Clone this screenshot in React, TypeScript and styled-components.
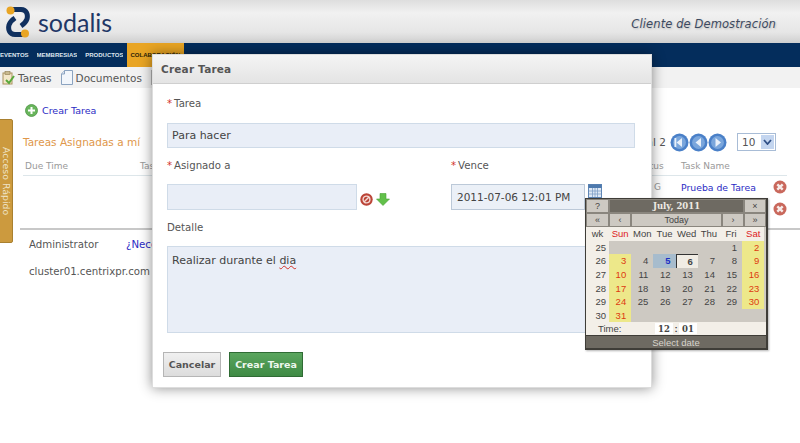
import styled, { createGlobalStyle } from "styled-components";

const GlobalStyle = createGlobalStyle`
  html, body {
    margin: 0;
    padding: 0;
    background: #fff;
    overflow: hidden;
  }
  #root {
    height: 443px;
  }
  * {
    box-sizing: border-box;
  }
`;

const FONT = `"DejaVu Sans", Verdana, sans-serif`;

const CALENDAR_WEEKS: { wk: number; days: (number | null)[] }[] = [
  { wk: 25, days: [null, null, null, null, null, 1, 2] },
  { wk: 26, days: [3, 4, 5, 6, 7, 8, 9] },
  { wk: 27, days: [10, 11, 12, 13, 14, 15, 16] },
  { wk: 28, days: [17, 18, 19, 20, 21, 22, 23] },
  { wk: 29, days: [24, 25, 26, 27, 28, 29, 30] },
  { wk: 30, days: [31, null, null, null, null, null, null] },
];
const DAY_NAMES = ["Sun", "Mon", "Tue", "Wed", "Thu", "Fri", "Sat"];

function Logo() {
  return (
    <svg width="24" height="32" viewBox="0 0 24 32">
      <path
        d="M5 3.5 H15 C21 3.5 22 9 21 13 C20 16 18 18 15 20"
        fill="none"
        stroke="#10305f"
        strokeWidth="5"
      />
      <path
        d="M19 28.5 H9 C3 28.5 2 23 3 19 C4 16 6 14 9 12"
        fill="none"
        stroke="#10305f"
        strokeWidth="5"
      />
      <circle cx="4.5" cy="4.5" r="4" fill="#e9a524" />
      <circle cx="19" cy="27.5" r="4" fill="#e9a524" />
    </svg>
  );
}

function TaskIcon() {
  return (
    <svg width="13" height="14" viewBox="0 0 13 14">
      <rect x="1" y="2" width="9" height="11" fill="#f3e7c9" stroke="#a8915f" />
      <rect x="3" y="0.5" width="5" height="3" fill="#c9b98e" stroke="#8d7a4e" strokeWidth="0.6" />
      <path d="M4 9 L7 12 L12 5" fill="none" stroke="#58a83c" strokeWidth="2" />
    </svg>
  );
}

function DocIcon() {
  return (
    <svg width="12" height="15" viewBox="0 0 12 15">
      <path d="M3.5 .5 H11.5 V14.5 H.5 V4 Z" fill="#f2f6fb" stroke="#8ba3c0" />
      <path d="M3.5 .5 V4 H.5" fill="#dbe5f1" stroke="#8ba3c0" />
    </svg>
  );
}

function PlusIcon() {
  return (
    <svg width="13" height="13" viewBox="0 0 13 13">
      <circle cx="6.5" cy="6.5" r="6" fill="#69b55c" stroke="#4c9444" strokeWidth="0.8" />
      <path d="M6.5 3 V10 M3 6.5 H10" stroke="#fff" strokeWidth="2" />
    </svg>
  );
}

function PagerIcon({ kind }: { kind: "first" | "prev" | "next" }) {
  return (
    <svg width="19" height="19" viewBox="0 0 19 19">
      <circle cx="9.5" cy="9.5" r="9" fill="#4a80c8" />
      <circle cx="9.5" cy="9.5" r="6.4" fill="#7aa6dc" />
      {kind === "next" ? (
        <path d="M7.5 5 L13 9.5 L7.5 14 Z" fill="#e8f0fa" />
      ) : (
        <path d="M12 5 L6.5 9.5 L12 14 Z" fill="#e8f0fa" />
      )}
      {kind === "first" && <rect x="4.5" y="5" width="1.8" height="9" fill="#e8f0fa" />}
    </svg>
  );
}

function CloseIcon() {
  return (
    <svg width="14" height="14" viewBox="0 0 14 14">
      <circle cx="7" cy="7" r="6.5" fill="#c9685c" />
      <path d="M4.3 4.3 L9.7 9.7 M9.7 4.3 L4.3 9.7" stroke="#f6ecea" strokeWidth="2.4" />
    </svg>
  );
}

function ClearIcon() {
  return (
    <svg width="13" height="13" viewBox="0 0 13 13">
      <circle cx="6.5" cy="6.5" r="6.2" fill="#bb4437" />
      <circle cx="6.5" cy="6.5" r="3.4" fill="none" stroke="#f3d9d4" strokeWidth="1.4" />
      <path d="M4 9 L9 4" stroke="#f3d9d4" strokeWidth="1.4" />
    </svg>
  );
}

function DownIcon() {
  return (
    <svg width="14" height="13" viewBox="0 0 14 13">
      <path d="M4 0.5 H10 V6 H13.5 L7 12.5 L.5 6 H4 Z" fill="#62c04a" stroke="#4aa336" strokeWidth="0.6" />
    </svg>
  );
}

function CalendarIcon() {
  return (
    <svg width="14" height="14" viewBox="0 0 14 14">
      <rect x="0.5" y="0.5" width="13" height="13" fill="#dfe9f5" stroke="#5f86b5" />
      <rect x="0.5" y="0.5" width="13" height="3.5" fill="#4d79ad" />
      <path
        d="M4.5 4 V13 M7 4 V13 M9.5 4 V13 M1 7 H13 M1 10 H13"
        stroke="#7f9fc6"
        strokeWidth="0.8"
      />
    </svg>
  );
}

const Page = styled.div`
  position: relative;
  width: 800px;
  height: 443px;
  overflow: hidden;
  font-family: ${FONT};
  color: #555;
`;

const TopBar = styled.header`
  height: 43px;
  padding: 6px 24px 0 6px;
  display: flex;
  justify-content: space-between;
  background: linear-gradient(#dedede, #f1f1f1 30%, #e6e6e6 75%, #cfcfcf);
`;

const Brand = styled.div`
  display: flex;
  align-items: center;
  height: 32px;
  gap: 8px;
  font-family: "Lato", "Open Sans", sans-serif;
  font-size: 25px;
  color: #1f3766;
`;

const ClientName = styled.div`
  font-family: "DejaVu Sans", sans-serif;
  font-style: italic;
  font-size: 11.5px;
  letter-spacing: 0.1px;
  color: #3d4a5f;
  padding-top: 11px;
  text-shadow: 1px 1px 2px #bbb;
`;

const NavBar = styled.nav`
  height: 24px;
  background: #042d5c;
  display: flex;
  align-items: stretch;
`;

const NavItem = styled.a<{ $active?: boolean }>`
  display: flex;
  align-items: center;
  padding-left: ${(p) => (p.$active ? "3px" : 0)};
  margin: ${(p) => (p.$active ? "0 0 0 -4px" : "0 8px 0 0")};
  width: ${(p) => (p.$active ? "57px" : "auto")};
  background: ${(p) => (p.$active ? "#e9a524" : "transparent")};
  color: ${(p) => (p.$active ? "#2a2208" : "#dfe6ef")};
  font-family: "Liberation Sans", sans-serif;
  font-size: 6px;
  font-weight: bold;
  white-space: nowrap;
  overflow: hidden;
`;

const TabBar = styled.div`
  height: 21px;
  background: #f2f2f2;
  display: flex;
  align-items: center;
  padding-left: 2px;
  font-size: 10.5px;
  color: #555;
`;

const Tab = styled.div`
  display: flex;
  align-items: center;
  gap: 3px;
  margin-right: 9px;
`;

const TabDivider = styled.span`
  width: 1px;
  height: 15px;
  background: #b5b5b5;
`;

const Content = styled.main`
  padding: 15px 13px 0 23px;
`;

const AddLink = styled.a`
  display: flex;
  align-items: center;
  gap: 4px;
  height: 14px;
  margin-left: 2px;
  font-size: 9.5px;
  color: #2b2bc4;
`;

const ListHead = styled.div`
  display: flex;
  justify-content: space-between;
  align-items: center;
  height: 20px;
  margin-top: 15px;
`;

const ListTitle = styled.h2`
  margin: 0;
  font-size: 10.5px;
  font-weight: normal;
  color: #e0974a;
`;

const Pager = styled.div`
  display: flex;
  align-items: center;
  font-size: 10.5px;
`;

const PagerButtons = styled.div`
  display: flex;
  margin: 0 10px 0 4px;
`;

const PageSize = styled.div`
  width: 39px;
  height: 18px;
  margin-right: 11px;
  border: 1px solid #a8bcd6;
  display: flex;
  align-items: center;
  justify-content: space-between;
  padding: 0 1px 0 4px;
  font-size: 10.5px;
  background: #fff;
`;

const PageSizeArrow = styled.span`
  width: 13px;
  height: 14px;
  background: #c3d5ef;
  display: flex;
  align-items: center;
  justify-content: center;
`;

const TableRow = styled.div<{ $head?: boolean }>`
  display: grid;
  grid-template-columns: 115px 495px 46px 92px 1fr;
  align-items: center;
  height: ${(p) => (p.$head ? "19px" : "22px")};
  padding-left: 2px;
  margin-top: ${(p) => (p.$head ? "5px" : 0)};
  border-bottom: ${(p) => (p.$head ? "1px solid #dde6ea" : "none")};
  font-size: 9px;
  color: #999;
`;

const StatusValue = styled.span`
  padding-left: 19px;
`;

const TaskLink = styled.a`
  color: #2b2bc4;
  font-size: 9.3px;
  white-space: nowrap;
`;

const Footer = styled.footer`
  margin: 8px -13px 0 -3px;
  border-top: 2px solid #c8c8c8;
  padding: 9px 0 0 9px;
  font-size: 10.2px;
  color: #555;
`;

const FooterLine = styled.div`
  display: flex;
  height: 27px;
  white-space: nowrap;
`;

const FooterUser = styled.span`
  width: 97px;
`;

const HelpLink = styled.a`
  color: #2b2bc4;
`;

const QuickAccess = styled.div`
  position: absolute;
  left: -1px;
  top: 119px;
  width: 14px;
  height: 124px;
  background: #cc9a3e;
  border: 1px solid #a9802f;
  border-radius: 0 2px 2px 0;
  display: flex;
  align-items: center;
  justify-content: center;
  color: #efe3c6;
  font-size: 9.4px;
  writing-mode: vertical-rl;
`;

const Modal = styled.section`
  position: absolute;
  left: 152px;
  top: 54px;
  width: 500px;
  height: 334px;
  background: #fff;
  border: 1px solid #ddd;
  box-shadow: 0 0 12px rgba(0, 0, 0, 0.45);
`;

const ModalHead = styled.div`
  height: 29px;
  padding-left: 8px;
  display: flex;
  align-items: center;
  background: linear-gradient(#f4f4f4, #e4e4e4);
  border-bottom: 1px solid #cfcfcf;
  font-size: 10.5px;
  font-weight: bold;
  letter-spacing: 0.2px;
  color: #555;
`;

const ModalBody = styled.div`
  padding: 13px 16px 0 14px;
`;

const Label = styled.label`
  display: block;
  height: 14px;
  font-size: 10.2px;
  line-height: 14px;
  color: #555;
`;

const Req = styled.span`
  color: #d2332a;
  margin-right: 2px;
`;

const Field = styled.input`
  display: block;
  height: 26px;
  width: 100%;
  padding: 0 4px;
  border: 1px solid #cfdbe8;
  background: #e9eef7;
  font-family: ${FONT};
  font-size: 11px;
  color: #444;
  outline: none;
`;

const TaskField = styled(Field)`
  margin-top: 12px;
  height: 25px;
`;

const DueField = styled(Field)`
  width: 134px;
  padding: 0 5px;
  border-color: #bcc9d8;
  background: #ebf0f7;
  font-size: 10.5px;
`;

const AssignedField = styled(Field)`
  width: 190px;
`;

const TwoCols = styled.div`
  display: grid;
  grid-template-columns: 284px 1fr;
  margin-top: 11px;
`;

const FieldRow = styled.div<{ $align: string }>`
  display: flex;
  align-items: ${(p) => p.$align};
  gap: 3px;
  margin-top: 11px;
`;

const AssignActions = styled.div`
  display: flex;
  gap: 3px;
  padding-bottom: 4px;
`;

const DetailLabel = styled(Label)`
  margin-top: 11px;
`;

const DetailBox = styled.div`
  margin-top: 11px;
  height: 87px;
  padding: 7px 4px;
  border: 1px solid #cfdbe8;
  background: #e9eef7;
  font-size: 11px;
  color: #444;
`;

const Misspelled = styled.span`
  text-decoration: underline wavy #d2332a 1px;
`;

const Actions = styled.div`
  display: flex;
  gap: 8px;
  margin: 19px 0 0 -4px;
`;

const Button = styled.button<{ $primary?: boolean }>`
  height: 25px;
  padding: 0;
  width: ${(p) => (p.$primary ? "74px" : "58px")};
  border: 1px solid ${(p) => (p.$primary ? "#2f6b34" : "#b5b5b5")};
  background: ${(p) =>
    p.$primary ? "linear-gradient(#5aa55e, #3e8a44)" : "linear-gradient(#f0f0f0, #dcdcdc)"};
  color: ${(p) => (p.$primary ? "#eef7ee" : "#555")};
  font-family: ${FONT};
  font-size: 9.5px;
  font-weight: bold;
`;

const Calendar = styled.div`
  position: absolute;
  left: 585px;
  top: 198px;
  width: 183px;
  height: 152px;
  border: 1px solid #3f3d38;
  border-width: 1px 2px 2px 1px;
  background: #f3efe8;
  font-family: "Liberation Sans", sans-serif;
  font-size: 9.5px;
  color: #444;
  box-shadow: 1px 1px 2px rgba(0, 0, 0, 0.3);
`;

const CalTitle = styled.div`
  display: grid;
  grid-template-columns: 23px 1fr 22px;
  height: 14px;
  background: #cdc9c2;
`;

const CalCell = styled.div<{ $dark?: boolean }>`
  display: flex;
  align-items: center;
  justify-content: center;
  border: 1px solid #8a867e;
  background: ${(p) => (p.$dark ? "#6e6a62" : "#cdc9c2")};
  color: ${(p) => (p.$dark ? "#eeeae2" : "#444")};
  font-family: ${(p) => (p.$dark ? `"DejaVu Serif", serif` : "inherit")};
  font-weight: ${(p) => (p.$dark ? "bold" : "normal")};
  font-size: ${(p) => (p.$dark ? "8.5px" : "9px")};
`;

const CalNav = styled.div`
  display: grid;
  grid-template-columns: 23px 22px 1fr 22px 22px;
  height: 14px;
`;

const CalGrid = styled.div`
  display: grid;
  grid-template-columns: 23px repeat(7, 22.2px);
  grid-auto-rows: 13.6px;
  background: #cdc9c2;
`;

const CalHeadCell = styled.div<{ $weekend?: boolean }>`
  display: flex;
  align-items: center;
  justify-content: center;
  background: #f3efe8;
  color: ${(p) => (p.$weekend ? "#dd2222" : "#444")};
`;

const WeekCell = styled.div`
  display: flex;
  align-items: center;
  justify-content: flex-end;
  padding-right: 3px;
  background: #f3efe8;
`;

const DayCell = styled.div<{ $weekend?: boolean; $today?: boolean; $selected?: boolean }>`
  display: flex;
  align-items: center;
  justify-content: flex-end;
  padding-right: 5px;
  background: ${(p) =>
    p.$selected ? "#f0ece4" : p.$today ? "#a7bccd" : p.$weekend ? "#ede88a" : "transparent"};
  color: ${(p) => (p.$weekend ? "#dd3a10" : p.$today ? "#1c2fc4" : "#444")};
  font-weight: ${(p) => (p.$today || p.$selected ? "bold" : "normal")};
  border-top: ${(p) => (p.$selected ? "1px solid #333" : "none")};
  border-left: ${(p) => (p.$selected ? "1px solid #333" : "none")};
`;

const EmptyDay = styled.div`
  background: #cdc9c2;
`;

const CalTime = styled.div`
  display: flex;
  align-items: center;
  height: 13px;
  padding-left: 12px;
  background: #f3efe8;
`;

const TimeLabel = styled.span`
  width: 57px;
`;

const TimeBox = styled.span`
  width: 18px;
  height: 11px;
  background: #fff;
  display: flex;
  align-items: center;
  justify-content: center;
  font-family: "DejaVu Serif", serif;
  font-weight: bold;
  font-size: 8.5px;
`;

const TimeColon = styled.span`
  width: 6px;
  text-align: center;
  font-weight: bold;
`;

const CalStatus = styled.div`
  height: 13px;
  display: flex;
  align-items: center;
  justify-content: center;
  background: #6e6a62;
  border-top: 1px solid #3f3d38;
  color: #d8d4cc;
`;

function CalWeek({ wk, days }: { wk: number; days: (number | null)[] }) {
  return (
    <>
      <WeekCell>{wk}</WeekCell>
      {days.map((day, i) =>
        day === null ? (
          <EmptyDay key={i} />
        ) : (
          <DayCell
            key={i}
            $weekend={i === 0 || i === 6}
            $today={day === 5}
            $selected={day === 6}
          >
            {day}
          </DayCell>
        )
      )}
    </>
  );
}

export default function App() {
  return (
    <Page>
      <GlobalStyle />
      <TopBar>
        <Brand>
          <Logo />
          sodalis
        </Brand>
        <ClientName>Cliente de Demostración</ClientName>
      </TopBar>
      <NavBar>
        <NavItem>EVENTOS</NavItem>
        <NavItem>MEMBRESIAS</NavItem>
        <NavItem>PRODUCTOS</NavItem>
        <NavItem $active>COLABORACIÓN</NavItem>
      </NavBar>
      <TabBar>
        <Tab>
          <TaskIcon />
          Tareas
        </Tab>
        <Tab>
          <DocIcon />
          Documentos
        </Tab>
        <TabDivider />
      </TabBar>
      <Content>
        <AddLink>
          <PlusIcon />
          Crear Tarea
        </AddLink>
        <ListHead>
          <ListTitle>Tareas Asignadas a mí</ListTitle>
          <Pager>
            Total 2
            <PagerButtons>
              <PagerIcon kind="first" />
              <PagerIcon kind="prev" />
              <PagerIcon kind="next" />
            </PagerButtons>
            <PageSize>
              10
              <PageSizeArrow>
                <svg width="9" height="6" viewBox="0 0 9 6">
                  <path d="M1 1 L4.5 5 L8 1" fill="none" stroke="#2f4f86" strokeWidth="1.8" />
                </svg>
              </PageSizeArrow>
            </PageSize>
          </Pager>
        </ListHead>
        <TableRow $head>
          <span>Due Time</span>
          <span>Task</span>
          <span>Status</span>
          <span>Task Name</span>
        </TableRow>
        <TableRow>
          <span />
          <span />
          <StatusValue>G</StatusValue>
          <TaskLink>Prueba de Tarea</TaskLink>
          <CloseIcon />
        </TableRow>
        <TableRow>
          <span />
          <span />
          <span />
          <span />
          <CloseIcon />
        </TableRow>
        <Footer>
          <FooterLine>
            <FooterUser>Administrator</FooterUser>
            <HelpLink>¿Necesita ayuda?</HelpLink>
          </FooterLine>
          <FooterLine>cluster01.centrixpr.com</FooterLine>
        </Footer>
      </Content>
      <QuickAccess>Acceso Rápido</QuickAccess>

      <Modal>
        <ModalHead>Crear Tarea</ModalHead>
        <ModalBody>
          <Label>
            <Req>*</Req>Tarea
          </Label>
          <TaskField readOnly value="Para hacer" />
          <TwoCols>
            <div>
              <Label>
                <Req>*</Req>Asignado a
              </Label>
              <FieldRow $align="flex-end">
                <AssignedField readOnly value="" />
                <AssignActions>
                  <ClearIcon />
                  <DownIcon />
                </AssignActions>
              </FieldRow>
            </div>
            <div>
              <Label>
                <Req>*</Req>Vence
              </Label>
              <FieldRow $align="flex-start">
                <DueField readOnly value="2011-07-06 12:01 PM" />
                <CalendarIcon />
              </FieldRow>
            </div>
          </TwoCols>
          <DetailLabel>Detalle</DetailLabel>
          <DetailBox>
            Realizar durante el <Misspelled>dia</Misspelled>
          </DetailBox>
          <Actions>
            <Button>Cancelar</Button>
            <Button $primary>Crear Tarea</Button>
          </Actions>
        </ModalBody>
      </Modal>

      <Calendar>
        <CalTitle>
          <CalCell>?</CalCell>
          <CalCell $dark>July, 2011</CalCell>
          <CalCell>×</CalCell>
        </CalTitle>
        <CalNav>
          <CalCell>«</CalCell>
          <CalCell>‹</CalCell>
          <CalCell>Today</CalCell>
          <CalCell>›</CalCell>
          <CalCell>»</CalCell>
        </CalNav>
        <CalGrid>
          <CalHeadCell>wk</CalHeadCell>
          {DAY_NAMES.map((d) => (
            <CalHeadCell key={d} $weekend={d === "Sun" || d === "Sat"}>
              {d}
            </CalHeadCell>
          ))}
          {CALENDAR_WEEKS.map((week) => (
            <CalWeek key={week.wk} wk={week.wk} days={week.days} />
          ))}
        </CalGrid>
        <CalTime>
          <TimeLabel>Time:</TimeLabel>
          <TimeBox>12</TimeBox>
          <TimeColon>:</TimeColon>
          <TimeBox>01</TimeBox>
        </CalTime>
        <CalStatus>Select date</CalStatus>
      </Calendar>
    </Page>
  );
}
